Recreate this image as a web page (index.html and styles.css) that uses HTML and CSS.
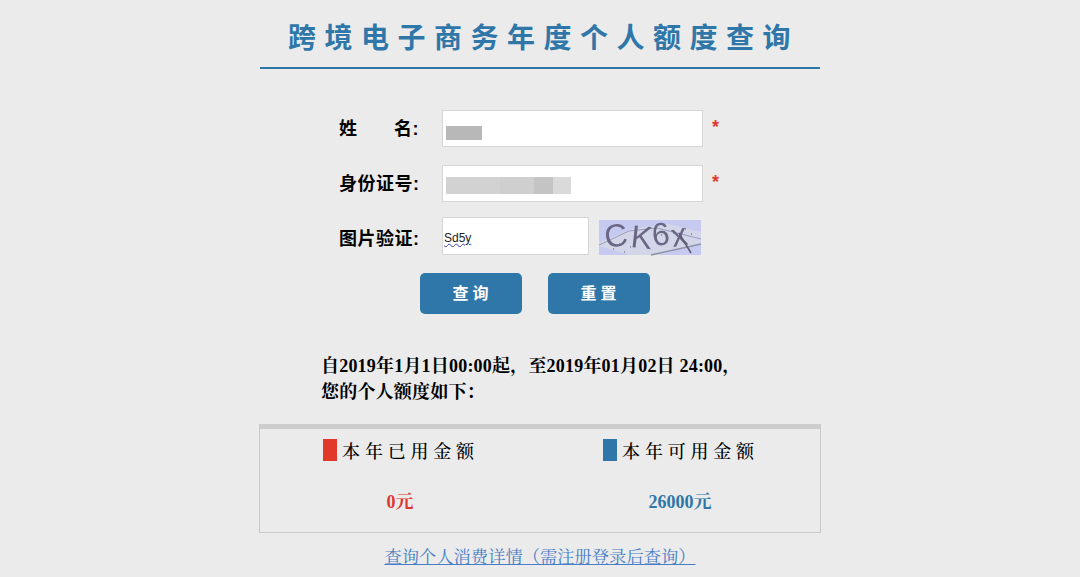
FILE: index.html
```html
<!DOCTYPE html>
<html lang="zh-CN">
<head>
    <meta charset="UTF-8">
    <meta name="viewport" content="width=device-width, initial-scale=1.0">
    <title>跨境电子商务年度个人额度查询</title>
    <link rel="stylesheet" href="styles.css">
</head>
<body>

    <div class="page">
        <h1 class="title">跨境电子商务年度个人额度查询</h1>

        <!-- Query Form -->
        <div class="form">
            <div class="row">
                <div class="label label-name"><span>姓</span><span>名:</span></div>
                <div class="field">
                    <div class="mask mask-name"></div>
                </div>
                <span class="required">*</span>
            </div>
            <div class="row">
                <div class="label">身份证号:</div>
                <div class="field">
                    <div class="mask mask-id">
                        <i></i><i></i><i></i><i></i>
                    </div>
                </div>
                <span class="required">*</span>
            </div>
            <div class="row row-captcha">
                <div class="label">图片验证:</div>
                <div class="field field-short"><span class="captcha-value">Sd5y</span></div>
                <svg class="captcha" viewBox="0 0 102 35" role="img" aria-label="验证码">
                    <rect width="102" height="35" fill="#c6caf0"/>
                    <path d="M0 22 L36 8 L70 4 L102 12 L102 24 L60 35 L30 35 L0 26 Z" fill="#d2d6e8"/>
                    <path d="M0 25 L30 11 L58 8 L102 19" fill="none" stroke="#9a9cbc" stroke-width="1"/>
                    <path d="M52 35 L102 24" fill="none" stroke="#8f92a8" stroke-width="1.4"/>
                    <path d="M14 29h1M20 24h1M25 32h1M31 27h1M62 15h1M68 19h1M74 13h1M80 18h1M86 9h1M92 14h1" stroke="#55586e" stroke-width="1.2"/>
                    <text class="captcha-text" x="7 31 54 74" y="28 27 26 27" rotate="-8 6 -6 -10">CK6x</text>
                    <path d="M80 13 L92 33" fill="none" stroke="#5f5c78" stroke-width="1.6"/>
                </svg>
            </div>
            <div class="buttons">
                <button class="btn">查询</button>
                <button class="btn">重置</button>
            </div>
        </div>

        <!-- Result -->
        <p class="notice">自2019年1月1日00:00起，至2019年01月02日 24:00，<br>您的个人额度如下：</p>

        <div class="quota">
            <div class="quota-col">
                <div class="legend"><span class="swatch swatch-red"></span>本年已用金额</div>
                <div class="amount amount-red">0元</div>
            </div>
            <div class="quota-col">
                <div class="legend"><span class="swatch swatch-blue"></span>本年可用金额</div>
                <div class="amount amount-blue">26000元</div>
            </div>
        </div>

        <a class="detail-link" href="#">查询个人消费详情（需注册登录后查询）</a>
    </div>

</body>
</html>
```

FILE: styles.css
```css
* {
    margin: 0;
    padding: 0;
    box-sizing: border-box;
}

body {
    background: #ebebeb;
    height: 577px;
    overflow: hidden;
    font-family: "Liberation Sans", "Noto Sans CJK SC", sans-serif;
}

.page {
    width: 562px;
    margin: 0 auto;
    padding-left: 1px;
}

.title {
    width: 560px;
    height: 69px;
    padding-top: 17px;
    border-bottom: 2px solid #2f77a8;
    color: #2f77a8;
    font-size: 28px;
    line-height: 44px;
    font-weight: 700;
    letter-spacing: 8.5px;
    text-indent: 7px;
    text-align: center;
    white-space: nowrap;
}

/* Query Form */
.form {
    padding-top: 41px;
}

.row {
    display: flex;
    align-items: center;
    height: 37px;
    margin-bottom: 18px;
    padding-left: 79px;
}

.row-captcha {
    height: 38px;
    margin-top: -3px;
}

.label {
    width: 103px;
    color: #000;
    font-size: 18px;
    font-weight: 700;
    letter-spacing: 0.5px;
    white-space: nowrap;
    padding-bottom: 4px;
}

.row-captcha .label {
    padding-bottom: 0;
    padding-top: 2px;
}

.label-name {
    display: flex;
    justify-content: space-between;
    width: 80px;
    margin-right: 23px;
}

.field {
    display: flex;
    align-items: center;
    width: 261px;
    height: 100%;
    background: #fff;
    border: 1px solid #d6d6d6;
}

.field-short {
    width: 147px;
}

.required {
    margin-left: 9px;
    margin-top: -3px;
    color: #e03a2e;
    font-size: 18px;
    font-weight: 700;
}

.mask {
    margin-left: 3px;
    filter: blur(0.6px);
}

.mask-name {
    width: 36px;
    height: 14px;
    margin-top: 9px;
    background: #b8b8b8;
}

.mask-id {
    display: flex;
    width: 125px;
    height: 17px;
    margin-top: 4px;
    background: #d4d4d4;
}

.mask-id i:nth-child(1) { width: 54px; background: #d2d2d2; }
.mask-id i:nth-child(2) { width: 34px; background: #cfcfcf; }
.mask-id i:nth-child(3) { width: 19px; background: #c4c4c4; }
.mask-id i:nth-child(4) { width: 18px; background: #dadada; }

.captcha-value {
    margin-left: 1px;
    margin-top: 3px;
    color: #222;
    font-size: 12px;
    text-decoration: underline wavy #3a3fa8 1px;
}

.captcha {
    width: 102px;
    height: 35px;
    margin-left: 10px;
    margin-top: 2px;
    overflow: visible;
    filter: blur(0.4px);
}

.captcha-text {
    fill: #6a6785;
    font-family: "Liberation Sans", sans-serif;
    font-size: 32px;
}

.buttons {
    display: flex;
    gap: 26px;
    padding-left: 160px;
}

.btn {
    width: 102px;
    height: 41px;
    padding-bottom: 3px;
    background: #2f77a8;
    color: #fff;
    border: none;
    border-radius: 5px;
    font-family: inherit;
    font-size: 16px;
    font-weight: 700;
    letter-spacing: 4px;
    text-indent: 3px;
    cursor: pointer;
}

/* Result */
.notice {
    padding: 39px 0 0 61px;
    height: 110px;
    color: #000;
    font-family: "Liberation Serif", "Noto Serif CJK SC", "Noto Sans CJK SC", serif;
    font-size: 18px;
    line-height: 26px;
    font-weight: 700;
    letter-spacing: 0.2px;
    white-space: nowrap;
}

.quota {
    display: flex;
    width: 562px;
    height: 109px;
    margin-left: -1px;
    border: 1px solid #c9c9c9;
    border-top: 5px solid #cdcdcd;
}

.quota-col {
    flex: 1;
    text-align: center;
    font-family: "Liberation Serif", "Noto Serif CJK SC", "Noto Sans CJK SC", serif;
}

.legend {
    display: flex;
    justify-content: center;
    align-items: center;
    height: 24px;
    margin-top: 9px;
    padding-left: 2px;
    color: #000;
    font-size: 18px;
    font-weight: 500;
    letter-spacing: 4.8px;
}

.swatch {
    width: 14px;
    height: 22px;
    margin-right: 5px;
}

.swatch-red { background: #e0382a; }
.swatch-blue { background: #2f77a8; }

.amount {
    margin-top: 27px;
    font-size: 18px;
    line-height: 26px;
    font-weight: 700;
}

.amount-red { color: #dc3a2e; }
.amount-blue { color: #2f77a8; }

.detail-link {
    display: block;
    width: 560px;
    margin-top: 12px;
    color: #4a7ec4;
    font-family: "Liberation Serif", "Noto Serif CJK SC", "Noto Sans CJK SC", serif;
    font-size: 17.3px;
    line-height: 26px;
    text-align: center;
}
```
